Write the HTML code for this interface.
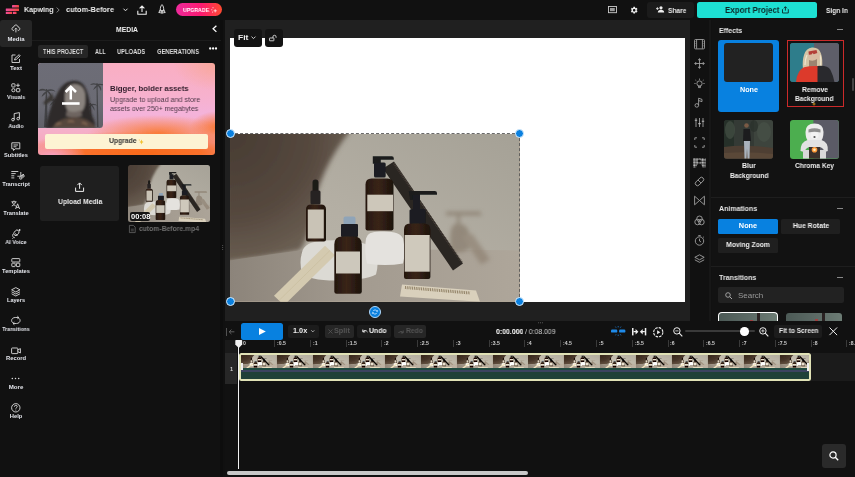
<!DOCTYPE html>
<html><head><meta charset="utf-8">
<style>
*{box-sizing:border-box;margin:0;padding:0}
html,body{width:855px;height:477px;overflow:hidden;background:#111;font-family:"Liberation Sans",sans-serif;color:#fff}
.a{position:absolute}
.t{position:absolute;white-space:nowrap;line-height:1;will-change:transform}
svg{position:absolute;overflow:visible}
</style></head><body>
<svg style="position:absolute;left:0;top:0;width:0;height:0"><symbol id="vid" viewBox="230 133.5 289.5 167.7" preserveAspectRatio="xMidYMid slice">
<defs>
<linearGradient id="gbg" x1="0" y1="1" x2="1" y2="0">
 <stop offset="0" stop-color="#bbb6ab"/><stop offset="0.45" stop-color="#b4afa4"/><stop offset="1" stop-color="#a5a196"/>
</linearGradient>
<radialGradient id="gleft" cx="230" cy="133" r="130" gradientUnits="userSpaceOnUse">
 <stop offset="0" stop-color="#483c33"/><stop offset="0.6" stop-color="#54473d"/><stop offset="1" stop-color="#6a5e52"/>
</radialGradient>
<linearGradient id="gfl" x1="0" y1="0" x2="1" y2="0">
 <stop offset="0" stop-color="#8c847a"/><stop offset="0.45" stop-color="#a39b90"/><stop offset="1" stop-color="#aea69a"/>
</linearGradient>
<linearGradient id="gbot" x1="0" y1="0" x2="1" y2="0"><stop offset="0" stop-color="#24170f"/><stop offset="0.45" stop-color="#3a2518"/><stop offset="1" stop-color="#1c120c"/></linearGradient>
<filter id="soft" x="-5%" y="-5%" width="110%" height="110%"><feGaussianBlur stdDeviation="0.45"/></filter>
<filter id="soft3" x="-20%" y="-20%" width="140%" height="140%"><feGaussianBlur stdDeviation="2.5"/></filter>
<filter id="soft4" x="-30%" y="-30%" width="160%" height="160%"><feGaussianBlur stdDeviation="2"/></filter>
<filter id="soft2" x="-30%" y="-30%" width="160%" height="160%"><feGaussianBlur stdDeviation="4"/></filter>
</defs>
<g filter="url(#soft)">
<rect x="230" y="133.5" width="289.5" height="167.7" fill="url(#gbg)"/>
<!-- left shadow arc -->
<g filter="url(#soft3)"><path d="M225 128 H352 Q318 170 312 215 Q308 240 300 250 Q270 256 225 262z" fill="url(#gleft)"/></g>
<!-- floor -->
<path d="M230 260 Q270 254 300 250 Q400 248 519.5 250 V301.2 H230z" fill="url(#gfl)"/>
<!-- shadows on wall right -->
<g filter="url(#soft4)" opacity="0.6">
<path d="M446 211 h34 l2 4 h-22 v8 q8 2 9 10 v16 q-8 4 -18 2 q-2 -12 0 -22 q2 -6 6 -6 v-8 h-11z" fill="#807262"/>
<path d="M462 236 l10 -3 l18 26 l-9 5z" fill="#8a7c6c"/>
</g>
<!-- white stones -->
<path d="M302 252 q2 -11 22 -12 q38 -2 50 8 q6 12 2 26 q-12 6 -40 6 q-28 0 -34 -8 q-3 -10 0 -20z" fill="#dcdad4"/>
<path d="M366 238 q1 -7 14 -7 q20 -1 23 7 q3 14 0 25 q-18 3 -36 0 q-3 -12 -1 -25z" fill="#e4e2de"/>
<!-- tall dark comb -->
<path d="M383 168 L394 161 L463 263 L453 270z" fill="#2b2622"/>
<path d="M394 163 L462 262" stroke="#4a423b" stroke-width="2" stroke-dasharray="0.9 0.9"/>
<!-- dropper bottle -->
<path d="M312.5 182 q0 -3 3 -3 q3 0 3 3 v9 h-6z" fill="#1d1a19"/>
<rect x="310.5" y="190" width="10" height="14" rx="1.5" fill="#252020"/>
<path d="M306 209 q0 -5 5 -5 h10 q5 0 5 5 v30 q0 2 -2 2 h-16 q-2 0 -2 -2z" fill="url(#gbot)"/>
<rect x="307.8" y="209" width="16" height="29" fill="#c9c3b6"/>
<!-- tall pump bottle -->
<path d="M372.8 155.7 h19 q2 0 2 2 v1.6 h-13 v4 h-8z" fill="#1a1c1e"/>
<rect x="374" y="162" width="11.7" height="15" rx="1.5" fill="#1c1e20"/>
<path d="M365.5 184 q0 -6 6 -6 h16 q6 0 6 6 v44 q0 2 -2 2 h-24 q-2 0 -2 -2z" fill="url(#gbot)"/>
<rect x="367.3" y="194.2" width="25.7" height="16.5" fill="#cdc7ba"/>
<!-- right pump bottle -->
<path d="M408.8 190.5 h26 q2.2 0 2.2 2 v1.7 h-17 v5 h-10z" fill="#1a1c1e"/>
<rect x="413" y="194" width="7" height="16" fill="#1c1e20"/>
<rect x="409.5" y="208.8" width="16.5" height="15" rx="1.5" fill="#1c1e20"/>
<path d="M404 229 q0 -6 6 -6 h14.4 q6 0 6 6 v47.5 q0 2 -2 2 h-22.4 q-2 0 -2 -2z" fill="url(#gbot)"/>
<rect x="404.7" y="234.5" width="25" height="36.7" fill="#cfc9bc"/>
<!-- wooden comb left -->
<path d="M274 295.2 L325 245.2 L335 254.8 L284 304.8z" fill="#d4cab0"/>
<path d="M279 300 L330 250" stroke="#c4b896" stroke-width="0.8" opacity="0.6"/>
<!-- front pump bottle -->
<rect x="343.5" y="216" width="12" height="8.6" rx="2" fill="#8fa4b8"/>
<rect x="341" y="223.5" width="17" height="13" rx="1" fill="#1c1e20"/>
<path d="M334.3 244 q0 -8 8 -8 h11.5 q8 0 8 8 v47 q0 2.2 -2.2 2.2 h-23 q-2.3 0 -2.3 -2.2z" fill="url(#gbot)"/>
<rect x="336" y="251" width="24" height="22" fill="#cdc8bc"/>
<!-- wooden comb right -->
<path d="M402 284 L476 290 L480 301.2 L400 296z" fill="#d9d0bc"/>
<path d="M405 287 L470 292.5" stroke="#8e7e62" stroke-width="3" stroke-dasharray="0.9 0.9"/>
</g>
</symbol></svg>
<div class="a" style="left:0px;top:0px;width:855px;height:20px;background:#111;"></div>
<svg style="left:0px;top:0px;" width="20" height="15" viewBox="0 0 20 15"><defs><linearGradient id="lg" x1="0" y1="0" x2="1" y2="0"><stop offset="0" stop-color="#ee4c9c"/><stop offset="1" stop-color="#f2443c"/></linearGradient></defs><g fill="url(#lg)">
 <rect x="12" y="5.1" width="7" height="2.5" rx="0.3"/>
 <rect x="5.8" y="8.4" width="13.2" height="2.6" rx="0.3"/>
 <rect x="5.8" y="11.8" width="6.4" height="2.3" rx="0.3"/>
 <rect x="13" y="11.8" width="3.5" height="2.3" rx="0.3"/></g></svg>
<div class="t" id="t0" style="left:24.10px;top:6.09px;font-size:7.9px;color:#eee;font-weight:bold;transform:scaleX(0.9003);transform-origin:0 0;">Kapwing</div>
<svg style="left:56px;top:7px;" width="4" height="6" viewBox="0 0 4 6"><path d="M0.6 0.6L3.2 3L0.6 5.4" stroke="#999" stroke-width="0.8" fill="none"/></svg>
<div class="t" id="t1" style="left:66.00px;top:6.09px;font-size:7.9px;color:#eee;font-weight:bold;transform:scaleX(0.9345);transform-origin:0 0;">cutom-Before</div>
<svg style="left:122.5px;top:8px;" width="5" height="4" viewBox="0 0 5 4"><path d="M0.5 0.7L2.5 2.8L4.5 0.7" stroke="#ddd" stroke-width="1" fill="none"/></svg>
<svg style="left:137px;top:4.5px;" width="10" height="10" viewBox="0 0 10 10"><path d="M5 7V1.2M2.6 3.4L5 1L7.4 3.4M0.8 5.8v3.4h8.4V5.8" stroke="#eee" stroke-width="1.1" fill="none"/></svg>
<svg style="left:158px;top:4px;" width="8" height="10" viewBox="0 0 8 10"><path d="M4 0.6C2.6 2 2.2 3.8 2.3 6.6h3.4C5.8 3.8 5.4 2 4 0.6zM2.3 5.5L0.8 8.6h1.6M5.7 5.5l1.5 3.1H5.6M3.1 7v2.6M4.9 7v2.6M4 7v2.6" stroke="#eee" stroke-width="0.9" fill="none"/></svg>
<div class="a" style="left:175.6px;top:3.3px;width:46.8px;height:12.7px;background:linear-gradient(90deg,#ee2a9c 0%,#fb1a70 55%,#ff4a30 100%);border-radius:6.5px;"></div>
<div class="t" id="t2" style="left:182.60px;top:6.72px;font-size:6.1px;color:#fff;font-weight:bold;transform:scaleX(0.8569);transform-origin:0 0;">UPGRADE</div>
<svg style="left:211px;top:7px;" width="6" height="6" viewBox="0 0 6 6"><path d="M4.2 2.2v3.2M2.6 3.8h3.2" stroke="#fff" stroke-width="0.7"/><circle cx="2" cy="0.7" r="0.55" fill="#fff"/><circle cx="0.8" cy="2.8" r="0.5" fill="#fff"/><circle cx="1.6" cy="5" r="0.5" fill="#fff"/></svg>
<svg style="left:608px;top:5.8px;" width="9" height="7.2" viewBox="0 0 9 7.2"><rect x="0.5" y="0.5" width="8" height="6.2" fill="none" stroke="#ccc" stroke-width="0.9"/><rect x="2" y="2" width="4.8" height="3.2" fill="#999"/></svg>
<svg style="left:629.8px;top:5.5px;" width="8.4" height="8.4" viewBox="0 0 24 24"><path fill="#eee" d="M19.14 12.94c.04-.3.06-.61.06-.94 0-.32-.02-.64-.07-.94l2.03-1.58a.49.49 0 0 0 .12-.61l-1.92-3.32a.488.488 0 0 0-.59-.22l-2.39.96c-.5-.38-1.03-.7-1.62-.94l-.36-2.54a.484.484 0 0 0-.48-.41h-3.840c-.24 0-.43.17-.47.41l-.36 2.54c-.59.24-1.13.57-1.62.94l-2.39-.96c-.22-.08-.47 0-.59.22L2.74 8.87c-.12.21-.08.47.12.61l2.03 1.58c-.05.3-.09.63-.09.94s.02.64.07.94l-2.030 1.58a.49.49 0 0 0-.12.61l1.92 3.32c.12.22.37.29.59.22l2.39-.96c.5.38 1.03.7 1.62.94l.36 2.54c.05.24.24.41.48.41h3.84c.24 0 .44-.17.47-.41l.36-2.54c.59-.24 1.13-.56 1.62-.94l2.39.96c.22.08.47 0 .59-.22l1.92-3.32c.12-.22.07-.47-.12-.61l-2.01-1.58zM12 15.6c-1.98 0-3.6-1.62-3.6-3.6s1.62-3.6 3.6-3.6 3.6 1.62 3.6 3.6-1.62 3.6-3.6 3.6z"/></svg>
<div class="a" style="left:647.4px;top:1.8px;width:46.8px;height:16px;background:#1b1b1b;border-radius:3px;"></div>
<svg style="left:655.6px;top:6.3px;" width="8" height="6.5" viewBox="0 0 8 6.5"><circle cx="5" cy="1.8" r="1.6" fill="#eee"/><path d="M1.8 6.5c0-1.9 1.4-2.8 3.2-2.8s3.2.9 3.2 2.8z" fill="#eee"/><path d="M0 2.6h2.8M1.4 1.2v2.8" stroke="#eee" stroke-width="0.8"/></svg>
<div class="t" id="t3" style="left:667.60px;top:6.76px;font-size:7.7px;color:#e8e8e8;font-weight:bold;transform:scaleX(0.8639);transform-origin:0 0;">Share</div>
<div class="a" style="left:697px;top:1.9px;width:120.4px;height:15.9px;background:#1de0d3;border-radius:2.5px;"></div>
<div class="t" id="t4" style="left:724.70px;top:6.15px;font-size:9px;color:#0c2a2a;font-weight:bold;transform:scaleX(0.8859);transform-origin:0 0;">Export Project</div>
<svg style="left:782.3px;top:5.8px;" width="6.8" height="7.5" viewBox="0 0 6.8 7.5"><path d="M3.4 4.6V0.8M1.8 2.3L3.4 0.7L5 2.3M0.5 3.2v3.8h5.8V3.2" stroke="#0c2a2a" stroke-width="0.9" fill="none"/></svg>
<div class="t" id="t5" style="left:825.50px;top:7.15px;font-size:7.7px;color:#f0f0f0;font-weight:bold;transform:scaleX(0.8570);transform-origin:0 0;">Sign In</div>
<div class="a" style="left:0px;top:20px;width:32px;height:26.5px;background:#262626;border-radius:2.5px;"></div>
<svg style="left:11.2px;top:24.2px;" width="9.6" height="9.6" viewBox="0 0 9.6 9.6"><path d="M3 6.6C1.8 6.6 1 5.8 1 4.8S1.7 3.1 2.7 3.1C3 1.8 3.8 1 4.9 1s1.9.8 2.2 2.1c1 0 1.7.8 1.7 1.7S8.1 6.6 6.8 6.6" stroke="#ddd" stroke-width="0.9" fill="none"/><path d="M4.9 8.4V4.3M3.7 5.4L4.9 4.2L6.1 5.4" stroke="#ddd" stroke-width="0.9" fill="none"/></svg>
<div class="t" id="t6" style="left:16.00px;top:36.84px;font-size:5.6px;color:#e4e6ec;font-weight:bold;transform:translateX(-50%) scaleX(1.0654);transform-origin:50% 0;">Media</div>
<svg style="left:11.2px;top:54.35000000000001px;" width="9.6" height="9.6" viewBox="0 0 9.6 9.6"><path d="M4.5 1H1v7.5h7.5V5" stroke="#ddd" stroke-width="0.9" fill="none"/><path d="M3.5 6L4 4.3L8.2 0.7L9.2 1.8L5.2 5.6z" stroke="#ddd" stroke-width="0.9" fill="none"/></svg>
<div class="t" id="t7" style="left:16.00px;top:65.89px;font-size:5.6px;color:#e4e6ec;font-weight:bold;transform:translateX(-50%) scaleX(1.0917);transform-origin:50% 0;">Text</div>
<svg style="left:11.2px;top:83.4px;" width="9.6" height="9.6" viewBox="0 0 9.6 9.6"><rect x="0.8" y="0.8" width="3.2" height="3.2" rx="0.5" stroke="#ddd" stroke-width="0.9" fill="none"/><path d="M7 0.5v3.6M5.2 2.3h3.6" stroke="#ddd" stroke-width="0.9" fill="none"/><rect x="0.8" y="5.6" width="3.2" height="3.2" rx="1.6" stroke="#ddd" stroke-width="0.9" fill="none"/><rect x="5.4" y="5.6" width="3.4" height="3.2" rx="0.5" stroke="#ddd" stroke-width="0.9" fill="none"/></svg>
<div class="t" id="t8" style="left:16.00px;top:94.94px;font-size:5.6px;color:#e4e6ec;font-weight:bold;transform:translateX(-50%) scaleX(0.9240);transform-origin:50% 0;">Visuals</div>
<svg style="left:11.2px;top:112.45px;" width="9.6" height="9.6" viewBox="0 0 9.6 9.6"><path d="M3.2 7.6V1.6L8.4 0.6V6.6" stroke="#ddd" stroke-width="0.9" fill="none"/><circle cx="2" cy="7.6" r="1.3" stroke="#ddd" stroke-width="0.9" fill="none"/><circle cx="7.2" cy="6.6" r="1.3" stroke="#ddd" stroke-width="0.9" fill="none"/></svg>
<div class="t" id="t9" style="left:16.00px;top:123.99px;font-size:5.6px;color:#e4e6ec;font-weight:bold;transform:translateX(-50%) scaleX(0.9478);transform-origin:50% 0;">Audio</div>
<svg style="left:11.2px;top:141.5px;" width="9.6" height="9.6" viewBox="0 0 9.6 9.6"><path d="M0.8 0.8h8v6h-4.5L2.5 8.5V6.8H0.8z" stroke="#ddd" stroke-width="0.9" fill="none"/><path d="M2.5 3h4.5M2.5 4.8h3" stroke="#ddd" stroke-width="0.9" fill="none"/></svg>
<div class="t" id="t10" style="left:16.00px;top:153.04px;font-size:5.6px;color:#e4e6ec;font-weight:bold;transform:translateX(-50%) scaleX(1.0059);transform-origin:50% 0;">Subtitles</div>
<svg style="left:11.4px;top:170.6px;" width="14" height="8.6" viewBox="0 0 14 8.6"><path d="M0.3 0.5h7M0.3 2.6h4.4M0.3 4.8h3M0.3 6.9h3" stroke="#ddd" stroke-width="0.9" fill="none"/><path d="M9.8 1v4.2l-3.4 0.1M9.8 5.2l3.2-2" stroke="#ddd" stroke-width="0.9" fill="none"/><circle cx="12" cy="5" r="1.2" stroke="#ddd" stroke-width="0.9" fill="none"/><circle cx="9.8" cy="7" r="1.2" stroke="#ddd" stroke-width="0.9" fill="none"/></svg>
<div class="t" id="t11" style="left:16.00px;top:182.09px;font-size:5.6px;color:#e4e6ec;font-weight:bold;transform:translateX(-50%) scaleX(1.0194);transform-origin:50% 0;">Transcript</div>
<svg style="left:11.2px;top:199.6px;" width="9.6" height="9.6" viewBox="0 0 9.6 9.6"><path d="M0.5 1.8h5M3 0.6v1.2M1.2 1.8c.6 2 1.8 3.3 3.6 4.2M4.6 1.8C4 3.8 2.8 5.2 0.8 6" stroke="#ddd" stroke-width="0.9" fill="none"/><path d="M4.6 9L6.6 3.8L8.6 9M5.3 7.4h2.6" stroke="#ddd" stroke-width="0.9" fill="none"/></svg>
<div class="t" id="t12" style="left:16.00px;top:211.14px;font-size:5.6px;color:#e4e6ec;font-weight:bold;transform:translateX(-50%) scaleX(1.0291);transform-origin:50% 0;">Translate</div>
<svg style="left:11.2px;top:228.64999999999998px;" width="9.6" height="9.6" viewBox="0 0 9.6 9.6"><rect x="3.4" y="0.8" width="4" height="6" rx="2" transform="rotate(40 5.4 3.8)" stroke="#ddd" stroke-width="0.9" fill="none"/><path d="M4 4.5l2.5 2" stroke="#ddd" stroke-width="0.9" fill="none"/><path d="M1.8 5.2c-.6 1.6.2 3.2 2 3.6M2.6 8.6L1.4 9.6" stroke="#ddd" stroke-width="0.9" fill="none"/><circle cx="8.6" cy="1" r="0.9" fill="#ddd"/></svg>
<div class="t" id="t13" style="left:16.00px;top:240.19px;font-size:5.6px;color:#e4e6ec;font-weight:bold;transform:translateX(-50%) scaleX(0.9812);transform-origin:50% 0;">AI Voice</div>
<svg style="left:11.2px;top:257.7px;" width="9.6" height="9.6" viewBox="0 0 9.6 9.6"><rect x="0.8" y="0.6" width="8" height="3.4" rx="0.6" stroke="#ddd" stroke-width="0.9" fill="none"/><rect x="0.8" y="5.2" width="3.4" height="3.4" rx="0.6" stroke="#ddd" stroke-width="0.9" fill="none"/><rect x="5.4" y="5.2" width="3.4" height="3.4" rx="0.6" stroke="#ddd" stroke-width="0.9" fill="none"/></svg>
<div class="t" id="t14" style="left:16.00px;top:269.24px;font-size:5.6px;color:#e4e6ec;font-weight:bold;transform:translateX(-50%) scaleX(1.0223);transform-origin:50% 0;">Templates</div>
<svg style="left:11.2px;top:286.75px;" width="9.6" height="9.6" viewBox="0 0 9.6 9.6"><path d="M4.8 0.6L9 2.8L4.8 5L0.6 2.8z" stroke="#ddd" stroke-width="0.9" fill="none"/><path d="M0.6 4.8L4.8 7L9 4.8M0.6 6.8L4.8 9L9 6.8" stroke="#ddd" stroke-width="0.9" fill="none"/></svg>
<div class="t" id="t15" style="left:16.00px;top:298.29px;font-size:5.6px;color:#e4e6ec;font-weight:bold;transform:translateX(-50%) scaleX(1.0008);transform-origin:50% 0;">Layers</div>
<svg style="left:11.2px;top:315.8px;" width="9.6" height="9.6" viewBox="0 0 9.6 9.6"><path d="M2.5 7.2C1.3 6.6 0.6 5.6 0.6 4.5c0-1.8 1.7-3 3.6-3H7.8M6.4 0.2L7.8 1.5L6.4 2.8M7.2 1.8c1.2.6 1.9 1.6 1.9 2.7 0 1.8-1.7 3-3.6 3H2M3.4 8.8L2 7.5L3.4 6.2" stroke="#ddd" stroke-width="0.9" fill="none"/></svg>
<div class="t" id="t16" style="left:16.00px;top:327.34px;font-size:5.6px;color:#e4e6ec;font-weight:bold;transform:translateX(-50%) scaleX(0.9152);transform-origin:50% 0;">Transitions</div>
<svg style="left:11.2px;top:346.85px;" width="9.6" height="9.6" viewBox="0 0 9.6 9.6"><rect x="0.6" y="1" width="6.2" height="5.6" rx="0.6" stroke="#ddd" stroke-width="0.9" fill="none"/><path d="M6.8 3l2.6-1.4v4.4L6.8 4.6" stroke="#ddd" stroke-width="0.9" fill="none"/></svg>
<div class="t" id="t17" style="left:16.00px;top:356.39px;font-size:5.6px;color:#e4e6ec;font-weight:bold;transform:translateX(-50%) scaleX(1.0416);transform-origin:50% 0;">Record</div>
<svg style="left:11.2px;top:373.90000000000003px;" width="9.6" height="9.6" viewBox="0 0 9.6 9.6"><circle cx="1.3" cy="4.5" r="0.75" fill="#ddd"/><circle cx="4.5" cy="4.5" r="0.75" fill="#ddd"/><circle cx="7.7" cy="4.5" r="0.75" fill="#ddd"/></svg>
<div class="t" id="t18" style="left:16.00px;top:385.44px;font-size:5.6px;color:#e4e6ec;font-weight:bold;transform:translateX(-50%) scaleX(1.0925);transform-origin:50% 0;">More</div>
<svg style="left:11.2px;top:402.95000000000005px;" width="9.6" height="9.6" viewBox="0 0 9.6 9.6"><circle cx="4.8" cy="4.8" r="4.2" stroke="#ddd" stroke-width="0.9" fill="none"/><path d="M3.4 3.7c0-.9.6-1.4 1.4-1.4s1.4.5 1.4 1.3c0 1-1.4 1.1-1.4 2.1" stroke="#ddd" stroke-width="0.9" fill="none"/><circle cx="4.8" cy="7.1" r="0.5" fill="#ddd"/></svg>
<div class="t" id="t19" style="left:16.00px;top:414.49px;font-size:5.6px;color:#e4e6ec;font-weight:bold;transform:translateX(-50%) scaleX(1.0376);transform-origin:50% 0;">Help</div>
<div class="a" style="left:220px;top:20px;width:2.5px;height:457px;background:#0d0d0d;"></div>
<div class="a" style="left:222.5px;top:20px;width:2.5px;height:457px;background:#101010;"></div>
<div class="t" id="t20" style="left:116.00px;top:26.62px;font-size:6.8px;color:#eee;font-weight:bold;transform:scaleX(1.0035);transform-origin:0 0;">MEDIA</div>
<svg style="left:212.3px;top:24.8px;" width="5.2" height="7.6" viewBox="0 0 5.2 7.6"><path d="M4.4 0.7L1.1 3.8L4.4 6.9" stroke="#fff" stroke-width="1.3" fill="none"/></svg>
<div class="a" style="left:32px;top:39.5px;width:188.5px;height:1px;background:#1c1c1c;"></div>
<div class="a" style="left:38.2px;top:44.8px;width:49.9px;height:12.9px;background:#262626;border-radius:2px;"></div>
<div class="t" id="t21" style="left:43.20px;top:47.98px;font-size:7.2px;color:#ddd;font-weight:bold;transform:scaleX(0.7673);transform-origin:0 0;">THIS PROJECT</div>
<div class="t" id="t22" style="left:94.90px;top:48.15px;font-size:7px;color:#ddd;font-weight:bold;transform:scaleX(0.7901);transform-origin:0 0;">ALL</div>
<div class="t" id="t23" style="left:117.30px;top:48.15px;font-size:7px;color:#ddd;font-weight:bold;transform:scaleX(0.8260);transform-origin:0 0;">UPLOADS</div>
<div class="t" id="t24" style="left:157.20px;top:48.15px;font-size:7px;color:#ddd;font-weight:bold;transform:scaleX(0.8279);transform-origin:0 0;">GENERATIONS</div>
<svg style="left:208.9px;top:47.2px;" width="8.2" height="3" viewBox="0 0 8.2 3"><circle cx="1.2" cy="1.5" r="1.15" fill="#fff"/><circle cx="4.1" cy="1.5" r="1.15" fill="#fff"/><circle cx="7" cy="1.5" r="1.15" fill="#fff"/></svg>
<div class="a" style="left:38.2px;top:62.8px;width:176.7px;height:92.6px;border-radius:3px;overflow:hidden;background:
 radial-gradient(ellipse 45px 28px at 180px 0px, rgba(248,165,145,0.85) 0%, rgba(248,165,145,0) 100%),
 radial-gradient(ellipse 34px 12px at 14px 92px, rgba(247,160,190,1) 0%, rgba(247,160,190,0) 100%),
 radial-gradient(ellipse 130px 22px at 105px 90px, #f96a1a 0%, rgba(250,110,35,0.95) 45%, rgba(250,120,40,0) 100%),
 radial-gradient(ellipse 70px 18px at 120px 70px, rgba(250,120,45,0.9) 0%, rgba(250,130,50,0) 100%),
 radial-gradient(ellipse 28px 16px at 180px 64px, rgba(250,115,40,0.95) 0%, rgba(250,125,45,0) 100%),
 linear-gradient(180deg,#f9aec2 0%,#f7b1cd 35%,#f4b3da 55%,#f5afc8 75%,#f7a2b4 100%)">
 <div class="a" style="left:0;top:0;width:65.3px;height:64.9px;border-radius:0 0 3.5px 0;background:linear-gradient(180deg,#6d6d77 0%,#6b6b74 60%,#606068 100%);overflow:hidden">
  <svg style="left:0;top:0" width="65.3" height="64.9" viewBox="0 0 65.3 64.9"><defs><filter id="pblur" x="-10%" y="-10%" width="120%" height="120%"><feGaussianBlur stdDeviation="0.9"/></filter></defs>
   <g fill="#3c3d3f" opacity="0.85">
    <path d="M6 64 L8 26 L9 26 L9.5 64z"/><path d="M8.5 27 q-6 -3 -8 1 q5 -1 8 0 q-4 2 -5 6 q5 -4 6 -5 q3 3 4 6 q0 -5 -3 -7 q5 -1 7 1 q-2 -4 -9 -2z"/>
    <path d="M13 64 L15 36 L16 36 L16.5 64z"/><path d="M15.5 37 q-5 -3 -8 0 q5 0 8 1 q-3 2 -4 5 q4 -3 5 -4 q3 2 4 5 q0 -4 -3 -6 q4 -1 6 1 q-2 -4 -8 -2z"/>
    <path d="M59 64 L58.5 20 L59.5 20 L60.5 64z"/><path d="M59 21 q-5 -2 -7 1 q4 -1 7 0 q-3 2 -4 5 q4 -3 5 -4 q2 2 3 5 q1 -4 -2 -6 q4 0 6 1 q-2 -3 -8 -2z"/>
    <path d="M51 64 L52 40 L53 40 L53.5 64z"/><path d="M52.5 41 q-5 -2 -7 1 q4 -1 7 0 q-3 2 -3 5 q3 -3 4 -4 q2 2 3 5 q0 -4 -2 -6 q4 0 5 1 q-2 -3 -7 -2z"/>
   </g>
   <g filter="url(#pblur)">
   <path d="M8 64.9 q1 -10 4 -18 q3 -10 8 -18 q5 -10 14 -11 q9 -1 13 6 q4 8 5 18 q1 10 4 15 q2 5 0 8z" fill="#2d2a29"/>
   <path d="M5 40 q4 -4 9 -10 l2 6 q-5 4 -9 6z" fill="#3a3736"/>
   <path d="M27 31 q1 -9 9 -10 q9 0 11 9 q1 10 -1 15 q-3 6 -9 6 q-7 -1 -9 -7 q-2 -6 -1 -13z" fill="#8a837e"/>
   <path d="M29 47 q6 4 14 0 l1 6 q-8 3 -16 0z" fill="#6e6560"/>
   <path d="M14 64.9 q6 -10 22 -11 q16 1 22 11z" fill="#57473c"/>
   <path d="M18 62 q3 -3 5 -1 M30 59 q3 -2 6 0 M44 60 q3 -1 5 2" stroke="#8a6e58" stroke-width="1.4" fill="none"/>
   </g>
  </svg>
 </div>
</div>
<svg style="left:62.4px;top:85px;" width="17.6" height="20" viewBox="0 0 17.6 20"><path d="M8.8 14.4V2.2M3.6 7L8.8 1.8L14 7" stroke="#fff" stroke-width="2.5" fill="none"/><rect x="0" y="17.2" width="17.6" height="2.6" fill="#fff"/></svg>
<div class="t" id="t25" style="left:110.40px;top:84.57px;font-size:7.8px;color:#2e1c2a;font-weight:bold;transform:scaleX(0.9962);transform-origin:0 0;">Bigger, bolder assets</div>
<div class="t" id="t26" style="left:110.40px;top:96.21px;font-size:7.4px;color:#4e3848;transform:scaleX(0.9640);transform-origin:0 0;">Upgrade to upload and store</div>
<div class="t" id="t27" style="left:110.40px;top:105.11px;font-size:7.4px;color:#4e3848;transform:scaleX(0.9312);transform-origin:0 0;">assets over 250+ megabytes</div>
<div class="a" style="left:44.9px;top:133.9px;width:163.3px;height:14.9px;background:#fdf3d3;border-radius:2px;"></div>
<div class="t" id="t28" style="left:108.80px;top:138.27px;font-size:7.1px;color:#333;font-weight:bold;transform:scaleX(0.9618);transform-origin:0 0;">Upgrade</div>
<svg style="left:137.8px;top:138.6px;" width="6" height="6" viewBox="0 0 6 6"><path d="M3.5 0.5Q3.8 2.6 5.6 3Q3.8 3.4 3.5 5.5Q3.2 3.4 1.4 3Q3.2 2.6 3.5 0.5z" fill="#f2c230"/><path d="M1.2 0.3Q1.3 1 2 1.1Q1.3 1.2 1.2 1.9Q1.1 1.2 0.4 1.1Q1.1 1 1.2 0.3z" fill="#f2c230"/></svg>
<div class="a" style="left:40.2px;top:165.7px;width:78.5px;height:55.3px;background:#1f1f1f;border-radius:2.5px;"></div>
<svg style="left:74.6px;top:181.7px;" width="9.2" height="10" viewBox="0 0 9.2 10"><path d="M4.6 6.8V1M2.4 3.1L4.6 0.9L6.8 3.1M0.6 5.6v3.8h8V5.6" stroke="#eee" stroke-width="1" fill="none"/></svg>
<div class="t" id="t29" style="left:57.60px;top:197.53px;font-size:7.5px;color:#eee;font-weight:bold;transform:scaleX(0.9101);transform-origin:0 0;">Upload Media</div>
<div class="a" style="left:128.2px;top:165px;width:81.6px;height:56.7px;border-radius:2.5px;overflow:hidden"><svg style="left:0;top:0" width="81.6" height="56.7" viewBox="255 135.6 234 162.5" preserveAspectRatio="none"><use href="#vid" x="230" y="133.5" width="289.5" height="167.7"/></svg></div>
<div class="a" style="left:129.8px;top:211.7px;width:20.6px;height:9.3px;background:#141414;border-radius:2px;"></div>
<div class="t" id="t30" style="left:130.80px;top:213.59px;font-size:6.6px;color:#fff;font-weight:bold;transform:scaleX(1.1471);transform-origin:0 0;">00:08</div>
<svg style="left:129.1px;top:225.3px;" width="6.6" height="8" viewBox="0 0 6.6 8"><path d="M0.4 0.4h4l1.8 1.8v5.4H0.4z" fill="none" stroke="#666" stroke-width="0.8"/><path d="M1.8 4.2h3M1.8 5.8h3" stroke="#666" stroke-width="0.7"/></svg>
<div class="t" id="t31" style="left:138.70px;top:225.41px;font-size:7.4px;color:#6f6f6f;font-weight:bold;transform:scaleX(0.9186);transform-origin:0 0;">cutom-Before.mp4</div>
<div class="a" style="left:225px;top:20px;width:465.4px;height:300.8px;background:#202020;"></div>
<div class="a" style="left:229.9px;top:38.3px;width:455.1px;height:263.4px;background:#fff;"></div>
<div class="a" id="video" style="left:230px;top:133.5px;width:289.5px;height:168px;overflow:hidden;background:#b3a592"><svg style="left:0;top:0" width="289.5" height="167.7" viewBox="0 0 289.5 167.7"><use href="#vid" x="0" y="0" width="289.5" height="167.7"/></svg>
</div>
<div class="a" style="left:229.5px;top:133px;width:290.5px;height:169px;border-top:1px dashed rgba(90,90,90,0.9);border-right:1px dashed rgba(90,90,90,0.9)"></div>
<div class="a" style="left:225.5px;top:129.0px;width:9px;height:9px;border-radius:50%;background:#0a80df;border:0.7px solid #d8ecfc"></div>
<div class="a" style="left:515.0px;top:129.0px;width:9px;height:9px;border-radius:50%;background:#0a80df;border:0.7px solid #d8ecfc"></div>
<div class="a" style="left:225.5px;top:296.7px;width:9px;height:9px;border-radius:50%;background:#0a80df;border:0.7px solid #d8ecfc"></div>
<div class="a" style="left:515.0px;top:296.7px;width:9px;height:9px;border-radius:50%;background:#0a80df;border:0.7px solid #d8ecfc"></div>
<div class="a" style="left:369.1px;top:306.2px;width:12px;height:12px;border-radius:50%;background:#0a80df;border:1px solid #b0d8fb"></div>
<svg style="left:372.1px;top:309.2px;" width="6" height="6" viewBox="0 0 6 6"><path d="M1 2.2A2.3 2.3 0 0 1 5.2 2.4M5 3.8A2.3 2.3 0 0 1 0.8 3.6" stroke="#a8d6ff" stroke-width="1" fill="none"/><path d="M4.2 2.4h1.4V1M1.8 3.6H0.4V5" stroke="#a8d6ff" stroke-width="0.8" fill="none"/></svg>
<svg style="left:537.5px;top:321.6px;" width="5" height="1.5" viewBox="0 0 5 1.5"><circle cx="0.6" cy="0.7" r="0.5" fill="#777"/><circle cx="2.5" cy="0.7" r="0.5" fill="#777"/><circle cx="4.4" cy="0.7" r="0.5" fill="#777"/></svg>
<svg style="left:221.6px;top:245px;" width="1.5" height="5" viewBox="0 0 1.5 5"><circle cx="0.7" cy="0.6" r="0.5" fill="#666"/><circle cx="0.7" cy="2.5" r="0.5" fill="#666"/><circle cx="0.7" cy="4.4" r="0.5" fill="#666"/></svg>
<div class="a" style="left:233.6px;top:28.9px;width:28px;height:17.8px;background:#131313;border-radius:3px;"></div>
<div class="t" id="t32" style="left:238.20px;top:34.41px;font-size:7.4px;color:#eee;font-weight:bold;transform:scaleX(1.1578);transform-origin:0 0;">Fit</div>
<svg style="left:250.7px;top:35.5px;" width="5" height="3.2" viewBox="0 0 5 3.2"><path d="M0.5 0.6L2.5 2.6L4.5 0.6" stroke="#ddd" stroke-width="0.9" fill="none"/></svg>
<div class="a" style="left:264.6px;top:28.9px;width:18.3px;height:17.8px;background:#131313;border-radius:3px;"></div>
<svg style="left:269.2px;top:34.6px;" width="8.4" height="6.2" viewBox="0 0 8.4 6.2"><rect x="0.5" y="3" width="4.4" height="2.8" rx="0.3" fill="none" stroke="#ddd" stroke-width="0.9"/><path d="M3.9 3V1.9a1.6 1.6 0 0 1 3.2 0v0.9" stroke="#ddd" stroke-width="0.9" fill="none"/></svg>
<div class="a" style="left:690.4px;top:20px;width:18.8px;height:300.8px;background:#111;"></div>
<div class="a" style="left:709.2px;top:20px;width:2.3px;height:300.8px;background:#171717;"></div>
<svg style="left:694.2px;top:38.5px;" width="11" height="11" viewBox="0 0 11 11"><rect x="0.5" y="0.5" width="10" height="9.4" rx="1" stroke="#a8a8a8" stroke-width="0.85" fill="none"/><path d="M2.6 0.8v8.8M8.4 0.8v8.8" stroke="#a8a8a8" stroke-width="0.85" fill="none"/><path d="M1.5 2.4h0.7M1.5 4.6h0.7M1.5 6.8h0.7M8.8 2.4h0.7M8.8 4.6h0.7M8.8 6.8h0.7" stroke="#bbb" stroke-width="0.6"/></svg>
<svg style="left:694.2px;top:58.1px;" width="11" height="11" viewBox="0 0 11 11"><path d="M5.5 0.8v9.4M0.8 5.5h9.4M4 2.2L5.5 0.8L7 2.2M4 8.8L5.5 10.2L7 8.8M2.2 4L0.8 5.5L2.2 7M8.8 4L10.2 5.5L8.8 7" stroke="#a8a8a8" stroke-width="0.85" fill="none"/></svg>
<svg style="left:694.2px;top:77.7px;" width="11" height="11" viewBox="0 0 11 11"><circle cx="5.5" cy="5.5" r="2.6" stroke="#a8a8a8" stroke-width="0.85" fill="none"/><path d="M4.5 8.2h2v1.4h-2z" stroke="#a8a8a8" stroke-width="0.85" fill="none"/><path d="M5.5 0.6v1.2M1.4 2l0.9 0.8M9.6 2l-0.9 0.8M0.4 5.5h1.2M9.4 5.5h1.2" stroke="#a8a8a8" stroke-width="0.85" fill="none"/></svg>
<svg style="left:694.2px;top:97.30000000000001px;" width="11" height="11" viewBox="0 0 11 11"><circle cx="2.8" cy="8.4" r="1.8" stroke="#a8a8a8" stroke-width="0.85" fill="none"/><path d="M4.6 8.4V1.2l3.4 1.2v2.2l-3.4-1" stroke="#a8a8a8" stroke-width="0.85" fill="none"/></svg>
<svg style="left:694.2px;top:116.9px;" width="11" height="11" viewBox="0 0 11 11"><path d="M2 1v9M5.5 1v9M9 1v9" stroke="#a8a8a8" stroke-width="0.85" fill="none"/><path d="M0.8 3.2h2.4M4.3 6.6h2.4M7.8 4.2h2.4" stroke="#bbb" stroke-width="1.1"/></svg>
<svg style="left:694.2px;top:136.5px;" width="11" height="11" viewBox="0 0 11 11"><path d="M0.8 3V0.8H3M8 0.8h2.2V3M10.2 8v2.2H8M3 10.2H0.8V8" stroke="#a8a8a8" stroke-width="0.85" fill="none"/></svg>
<svg style="left:693.4px;top:156.5px;" width="12.6" height="10.6" viewBox="0 0 12.6 10.6"><defs><pattern id="chk" width="2.2" height="2.2" patternUnits="userSpaceOnUse" patternTransform="rotate(45)"><rect width="1.1" height="1.1" fill="#e0e0e0"/><rect x="1.1" y="1.1" width="1.1" height="1.1" fill="#e0e0e0"/></pattern></defs><path d="M0 1h12.6v9.6H9.5q-1 -4 -3.2 -4q-2.2 0 -3.2 4H0z" fill="url(#chk)"/><circle cx="6.3" cy="4" r="1.6" fill="#111"/></svg>
<svg style="left:694.2px;top:175.70000000000002px;" width="11" height="11" viewBox="0 0 11 11"><rect x="0.5" y="3.3" width="10" height="4.4" rx="2.2" transform="rotate(-45 5.5 5.5)" stroke="#a8a8a8" stroke-width="0.85" fill="none"/><path d="M4 4l3 3" stroke="#a8a8a8" stroke-width="0.85" fill="none"/></svg>
<svg style="left:694.2px;top:195.3px;" width="11" height="11" viewBox="0 0 11 11"><path d="M0.6 1.2v8.6l4.9-4.3zM10.4 1.2v8.6L5.5 5.5z" stroke="#a8a8a8" stroke-width="0.85" fill="none"/></svg>
<svg style="left:694.2px;top:214.9px;" width="11" height="11" viewBox="0 0 11 11"><circle cx="5.5" cy="3.8" r="2.8" stroke="#a8a8a8" stroke-width="0.85" fill="none"/><circle cx="3.6" cy="7" r="2.8" stroke="#a8a8a8" stroke-width="0.85" fill="none"/><circle cx="7.4" cy="7" r="2.8" stroke="#a8a8a8" stroke-width="0.85" fill="none"/></svg>
<svg style="left:694.2px;top:234.5px;" width="11" height="11" viewBox="0 0 11 11"><circle cx="5.5" cy="6" r="4.2" stroke="#a8a8a8" stroke-width="0.85" fill="none"/><path d="M5.5 3.6V6l1.6 1M4.3 0.6h2.4M9.2 1.8l0.8 0.8" stroke="#a8a8a8" stroke-width="0.85" fill="none"/></svg>
<svg style="left:694.2px;top:254.10000000000002px;" width="11" height="11" viewBox="0 0 11 11"><path d="M5.5 0.8L10.2 3.3L5.5 5.8L0.8 3.3z" stroke="#a8a8a8" stroke-width="0.85" fill="none"/><path d="M0.8 5.8L5.5 8.3L10.2 5.8" stroke="#a8a8a8" stroke-width="0.85" fill="none"/></svg>
<div class="a" style="left:711.5px;top:20px;width:143.5px;height:300.8px;background:#121212;"></div>
<div class="t" id="t33" style="left:718.80px;top:26.54px;font-size:7.6px;color:#e6e6e6;font-weight:bold;transform:scaleX(0.9199);transform-origin:0 0;">Effects</div>
<div class="a" style="left:836.8px;top:29.4px;width:6.2px;height:1px;background:#888;"></div>
<div class="a" style="left:718.4px;top:39.9px;width:60.3px;height:72.3px;background:#0881e0;border-radius:3px;"></div>
<div class="a" style="left:724.2px;top:43px;width:48.7px;height:38.8px;background:#222;border-radius:3px;"></div>
<div class="t" id="t34" style="left:739.70px;top:85.55px;font-size:7px;color:#fff;font-weight:bold;transform:scaleX(1.0298);transform-origin:0 0;">None</div>
<div class="a" style="left:786.9px;top:39.9px;width:57.4px;height:67.4px;border:1.8px solid #cc2a2a"></div>
<div class="a" style="left:790px;top:42.6px;width:48.9px;height:39.2px;border-radius:3px;overflow:hidden;background:#2d7c8a">
<svg style="left:0;top:0;filter:blur(0.3px)" width="48.9" height="39.2" viewBox="0 0 48.9 39.2">
<rect x="0" y="0" width="24" height="39.2" fill="#2e7d8b"/>
<rect x="24" y="0" width="25" height="39.2" fill="#5e5e69"/>
<path d="M13 26 q-1 -8 1 -14 q2 -7 8 -7.5 q7 -0.5 9 6 q2 6 1 15 q-9 2 -19 0.5z" fill="#d4c5a6"/>
<path d="M15 22 q0 -6 2 -10 M30 12 q1.5 5 0.5 11" stroke="#efe6d0" stroke-width="1.2" fill="none"/>
<ellipse cx="24" cy="12.5" rx="5.8" ry="6.3" transform="rotate(-15 24 12.5)" fill="#d9bba2"/>
<path d="M18.5 8.5 l8 -1.5 l0.8 3 l-3.6 1.2 l-1 -1.2 l-1.2 1.6 l-2.6 0.2z" fill="#b33f38"/>
<path d="M19 17 q4 2 8 -1 v8 h-8z" fill="#9c8470"/>
<path d="M6 39.2 q1 -12 8 -15 q6 -1.5 14 -1.2 v16.4z" fill="#dc3a2b"/>
<path d="M27.5 23 q10 -1 13 4 q3 6 4 12.2 h-17z" fill="#29292d"/>
</svg></div>
<div class="t" id="t35" style="left:801.50px;top:85.55px;font-size:7px;color:#eee;font-weight:bold;transform:scaleX(0.9535);transform-origin:0 0;">Remove</div>
<div class="t" id="t36" style="left:795.20px;top:94.85px;font-size:7px;color:#eee;font-weight:bold;transform:scaleX(0.9416);transform-origin:0 0;">Background</div>
<svg style="left:812px;top:102px;" width="4" height="4" viewBox="0 0 4 4"><path d="M2 0.5v3M0.5 2h3" stroke="#e0a020" stroke-width="0.8"/></svg>
<div class="a" style="left:851.8px;top:77.6px;width:2.4px;height:13.6px;background:#444;border-radius:1px;"></div>
<div class="a" style="left:723.9px;top:120.1px;width:49.3px;height:38.6px;border-radius:3px;overflow:hidden;background:#323833">
<svg style="left:0;top:0;filter:blur(0.4px)" width="49.3" height="38.6" viewBox="0 0 49.3 38.6">
<rect width="49.3" height="38.6" fill="#343a35"/>
<path d="M0 0h10v30H0z" fill="#263029"/><path d="M30 0h19.3v28H30z" fill="#3d443d"/>
<ellipse cx="6" cy="10" rx="5" ry="9" fill="#445044" opacity="0.7"/><ellipse cx="40" cy="12" rx="7" ry="10" fill="#4a544a" opacity="0.6"/><ellipse cx="30" cy="6" rx="4" ry="6" fill="#2a302b" opacity="0.7"/>
<path d="M0 27 q20 -3 49.3 1 V38.6H0z" fill="#4e3f33"/>
<path d="M0 33 q25 -2 49.3 1 V38.6H0z" fill="#5a4838"/>
<circle cx="22.5" cy="5.5" r="2.3" fill="#7a5a45"/>
<path d="M19.5 9 h6.5 l1 12 h-8z" fill="#1c1c1e"/>
<path d="M20 21 h6 l-0.5 17.6 h-2 l-0.5 -10 l-0.5 10 h-2z" fill="#a9b2bc"/>
</svg></div>
<div class="t" id="t37" style="left:741.90px;top:162.35px;font-size:7px;color:#eee;font-weight:bold;transform:scaleX(0.9850);transform-origin:0 0;">Blur</div>
<div class="t" id="t38" style="left:729.90px;top:171.55px;font-size:7px;color:#eee;font-weight:bold;transform:scaleX(0.9391);transform-origin:0 0;">Background</div>
<div class="a" style="left:789.8px;top:120.1px;width:48.9px;height:38.6px;border-radius:3px;overflow:hidden;background:#4cae4f">
<svg style="left:0;top:0;filter:blur(0.3px)" width="48.9" height="38.6" viewBox="0 0 48.9 38.6">
<rect x="23.4" width="25.5" height="38.6" fill="#5b5b66"/>
<path d="M15.5 12 q0 -8.5 9 -8.5 q9 0 9 8.5 q0 7 -3 9 h-12 q-3 -2 -3 -9z" fill="#ececec"/>
<path d="M18.5 9.5 q6 -2.5 12 0 v3 q-6 -1.5 -12 0z" fill="#8e8e8e"/>
<ellipse cx="24.5" cy="15.5" rx="4" ry="3.2" fill="#f4f4f4"/>
<circle cx="24.5" cy="17" r="1.1" fill="#555"/>
<path d="M10.5 31 q0 -9 7 -11 h14 q7 2 6.3 11 l-3 1 q-2 -5 -6 -5 h-8.5 q-4 0 -6 5z" fill="#e2e2e2"/>
<path d="M13 30 h6 v8.6 h-6zM30 30 h6 v8.6 h-6z" fill="#d8d8d8"/>
<path d="M19 27 h11 v11.6 h-11z" fill="#3b302b"/>
<circle cx="24.5" cy="29.8" r="2.8" fill="#ff9a3a"/>
<circle cx="24.5" cy="29.8" r="1.3" fill="#fff0c0"/>
</svg></div>
<div class="t" id="t39" style="left:794.90px;top:162.35px;font-size:7px;color:#eee;font-weight:bold;transform:scaleX(0.9449);transform-origin:0 0;">Chroma Key</div>
<div class="a" style="left:711.2px;top:197.2px;width:143.8px;height:1px;background:#1e1e1e;"></div>
<div class="t" id="t40" style="left:719.20px;top:204.58px;font-size:7.2px;color:#e6e6e6;font-weight:bold;transform:scaleX(0.9760);transform-origin:0 0;">Animations</div>
<div class="a" style="left:837px;top:208px;width:6px;height:1px;background:#888;"></div>
<div class="a" style="left:718.4px;top:218.6px;width:59.8px;height:15.2px;background:#0881e0;border-radius:1.5px;"></div>
<div class="t" id="t41" style="left:748.30px;top:223.27px;font-size:7.1px;color:#fff;font-weight:bold;transform:translateX(-50%) scaleX(1.0338);transform-origin:50% 0;">None</div>
<div class="a" style="left:780.8px;top:218.6px;width:59.5px;height:15.2px;background:#1f1f1f;border-radius:1.5px;"></div>
<div class="t" id="t42" style="left:810.60px;top:223.27px;font-size:7.1px;color:#eee;font-weight:bold;transform:translateX(-50%) scaleX(0.9689);transform-origin:50% 0;">Hue Rotate</div>
<div class="a" style="left:718.4px;top:237.5px;width:59.8px;height:15.2px;background:#1f1f1f;border-radius:1.5px;"></div>
<div class="t" id="t43" style="left:748.30px;top:242.06px;font-size:7.1px;color:#eee;font-weight:bold;transform:translateX(-50%) scaleX(0.9471);transform-origin:50% 0;">Moving Zoom</div>
<div class="a" style="left:711.2px;top:265.6px;width:143.8px;height:1px;background:#1e1e1e;"></div>
<div class="t" id="t44" style="left:719.20px;top:274.08px;font-size:7.2px;color:#e6e6e6;font-weight:bold;transform:scaleX(0.9754);transform-origin:0 0;">Transitions</div>
<div class="a" style="left:837px;top:277.3px;width:6px;height:1px;background:#888;"></div>
<div class="a" style="left:718.4px;top:287.3px;width:125.8px;height:16.2px;background:#222;border-radius:2px;"></div>
<svg style="left:725px;top:292px;" width="7.5" height="7.5" viewBox="0 0 7.5 7.5"><circle cx="3" cy="3" r="2.3" stroke="#aaa" stroke-width="0.9" fill="none"/><path d="M4.7 4.7L7 7" stroke="#aaa" stroke-width="1"/></svg>
<div class="t" id="t45" style="left:737.50px;top:291.97px;font-size:7.8px;color:#999;transform:scaleX(1.0234);transform-origin:0 0;">Search</div>
<div class="a" style="left:718.4px;top:311.7px;width:59.2px;height:12px;border-radius:4px 4px 0 0;border:1.8px solid #fff;border-bottom:0;overflow:hidden;background:linear-gradient(90deg,#4c5a56,#5e6c67 60%,#6c7c74)">
<div class="a" style="left:38px;top:0;width:2.5px;height:12px;background:#2a2222"></div><div class="a" style="left:31px;top:7px;width:3px;height:4px;background:#a04040"></div></div>
<div class="a" style="left:786px;top:313.2px;width:55.9px;height:8px;border-radius:3px 3px 0 0;overflow:hidden;background:linear-gradient(90deg,#4c5a56,#5e6c67 60%,#6c7c74)">
<div class="a" style="left:36px;top:0;width:2.5px;height:12px;background:#2a2222"></div><div class="a" style="left:29px;top:5.5px;width:3px;height:4px;background:#a04040"></div></div>
<div class="a" style="left:225px;top:320.8px;width:630px;height:156.2px;background:#111;"></div>
<svg style="left:226px;top:327.6px;" width="8.6" height="8" viewBox="0 0 8.6 8"><path d="M0.5 0v8" stroke="#5a5a5a" stroke-width="0.9"/><path d="M8.4 3.8H3.2M5.4 1.6L3.2 3.8L5.4 6" stroke="#6a6a6a" stroke-width="0.9" fill="none"/></svg>
<div class="a" style="left:240.9px;top:323.3px;width:42.1px;height:16.6px;background:#0881e0;border-radius:2.5px;"></div>
<svg style="left:259.4px;top:328.2px;" width="6.8" height="7" viewBox="0 0 6.8 7"><path d="M0 0L6.8 3.5L0 7z" fill="#fff"/></svg>
<div class="a" style="left:288.4px;top:325px;width:30.6px;height:13.1px;background:#1c1c1c;border-radius:2px;"></div>
<div class="t" id="t46" style="left:292.70px;top:328.22px;font-size:6.8px;color:#eee;font-weight:bold;transform:scaleX(1.0753);transform-origin:0 0;">1.0x</div>
<svg style="left:310.9px;top:330.3px;" width="3.6" height="2.4" viewBox="0 0 3.6 2.4"><path d="M0.3 0.3L1.8 1.9L3.3 0.3" stroke="#ccc" stroke-width="0.8" fill="none"/></svg>
<div class="a" style="left:324.5px;top:325px;width:29.1px;height:13px;background:#262626;border-radius:2px;"></div>
<svg style="left:327.8px;top:328.6px;" width="5" height="5" viewBox="0 0 5 5"><path d="M0.5 0.5l4 4M4.5 0.5l-4 4" stroke="#555" stroke-width="0.8"/></svg>
<div class="t" id="t47" style="left:334.00px;top:327.76px;font-size:7.1px;color:#555;font-weight:bold;transform:scaleX(1.0297);transform-origin:0 0;">Split</div>
<div class="a" style="left:356.8px;top:325px;width:34px;height:13px;background:#1c1c1c;border-radius:2px;"></div>
<svg style="left:361.5px;top:329.2px;" width="6" height="4" viewBox="0 0 6 4"><path d="M0.8 0.5v2.4h2.4" stroke="#fff" stroke-width="0.9" fill="none"/><path d="M1 2.6C2 1.2 4.2 1 5.5 3" stroke="#fff" stroke-width="0.9" fill="none"/></svg>
<div class="t" id="t48" style="left:369.00px;top:327.76px;font-size:7.1px;color:#f2f2f2;font-weight:bold;transform:scaleX(0.9704);transform-origin:0 0;">Undo</div>
<div class="a" style="left:393.9px;top:325px;width:32.3px;height:13px;background:#262626;border-radius:2px;"></div>
<svg style="left:398px;top:329.5px;" width="6" height="4" viewBox="0 0 6 4"><path d="M0.5 3C1.8 1 4 1.2 5 2.6M5.2 0.5v2.4H2.8" stroke="#555" stroke-width="0.9" fill="none"/></svg>
<div class="t" id="t49" style="left:406.20px;top:327.76px;font-size:7.1px;color:#555;font-weight:bold;transform:scaleX(0.9516);transform-origin:0 0;">Redo</div>
<div class="t" id="t50" style="left:496.10px;top:327.80px;font-size:7.3px;color:#fff;font-weight:bold;transform:scaleX(0.9472);transform-origin:0 0;">0:00.000</div>
<div class="t" id="t51" style="left:525.10px;top:327.80px;font-size:7.3px;color:#d0d0d0;transform:scaleX(0.9421);transform-origin:0 0;">/ 0:08.009</div>
<svg style="left:537.6px;top:322.1px;" width="5" height="1.5" viewBox="0 0 5 1.5"><circle cx="0.6" cy="0.7" r="0.55" fill="#666"/><circle cx="2.5" cy="0.7" r="0.55" fill="#666"/><circle cx="4.4" cy="0.7" r="0.55" fill="#666"/></svg>
<svg style="left:610.8px;top:326.3px;" width="14.4" height="10" viewBox="0 0 14.4 10"><rect x="0" y="3.6" width="6.3" height="3" rx="1.2" fill="#1f8ae8"/><rect x="8.1" y="3.6" width="6.3" height="3" rx="1.2" fill="#1f8ae8"/><path d="M7.2 0v1.4M7.2 8.6V10M4.4 0.6l0.7 1.1M10 0.6l-0.7 1.1M4.4 9.4l0.7-1.1M10 9.4l-0.7-1.1" stroke="#1f8ae8" stroke-width="0.7"/></svg>
<svg style="left:631.9px;top:328px;" width="14.3" height="7.4" viewBox="0 0 14.3 7.4"><rect x="0" y="0" width="1.5" height="7.4" fill="#eee"/><rect x="12.8" y="0" width="1.5" height="7.4" fill="#eee"/><path d="M1.5 3.1h2.8v1.2H1.5zM12.8 3.1H10v1.2h2.8z" fill="#eee"/><path d="M3.6 1L6.4 3.7L3.6 6.4zM10.7 1L7.9 3.7L10.7 6.4z" fill="#eee"/></svg>
<svg style="left:652.9px;top:326.7px;" width="10.5" height="10.5" viewBox="0 0 10.5 10.5"><circle cx="5.25" cy="5.25" r="4.6" stroke="#eee" stroke-width="1.1" fill="none" stroke-dasharray="2.6 1"/><path d="M4.1 3.2L7.3 5.25L4.1 7.3z" fill="#eee"/></svg>
<svg style="left:672.5px;top:327.2px;" width="9.8" height="9.8" viewBox="0 0 9.8 9.8"><circle cx="3.9" cy="3.9" r="3.2" stroke="#eee" stroke-width="1" fill="none"/><path d="M6.2 6.2L9.3 9.3" stroke="#eee" stroke-width="1.1"/><path d="M2.3 3.9h3.2" stroke="#eee" stroke-width="0.8"/></svg>
<div class="a" style="left:685px;top:330.3px;width:70.3px;height:1.6px;background:#3a3a3a;border-radius:1px;"></div>
<div class="a" style="left:740.1px;top:327.3px;width:8.6px;height:8.6px;background:#fff;border-radius:4.3px;"></div>
<svg style="left:759.2px;top:327.2px;" width="9.8" height="9.8" viewBox="0 0 9.8 9.8"><circle cx="3.9" cy="3.9" r="3.2" stroke="#eee" stroke-width="1" fill="none"/><path d="M6.2 6.2L9.3 9.3" stroke="#eee" stroke-width="1.1"/><path d="M2.3 3.9h3.2M3.9 2.3v3.2" stroke="#eee" stroke-width="0.8"/></svg>
<div class="a" style="left:774px;top:325px;width:47.9px;height:12.6px;background:#1c1c1c;border-radius:2px;"></div>
<div class="t" id="t52" style="left:778.60px;top:328.02px;font-size:6.8px;color:#e6e6e6;font-weight:bold;transform:scaleX(0.9582);transform-origin:0 0;">Fit to Screen</div>
<svg style="left:828.8px;top:327.4px;" width="8.6" height="8.6" viewBox="0 0 8.6 8.6"><path d="M0.5 0.5l7.6 7.6M8.1 0.5L0.5 8.1" stroke="#eee" stroke-width="1"/></svg>
<div class="a" style="left:225px;top:340.2px;width:12.2px;height:12.8px;background:#1a1a1a;"></div>
<div class="t" id="t53" style="left:243.00px;top:341.47px;font-size:5.1px;color:#d0d0d0;font-weight:bold;">0</div>
<div class="a" style="left:274.15000000000003px;top:340.1px;width:0.9px;height:7px;background:#3a3a3a;"></div>
<div class="t" id="t54" style="left:276.90px;top:341.47px;font-size:5.1px;color:#d0d0d0;font-weight:bold;">:0.5</div>
<div class="a" style="left:309.91px;top:340.1px;width:0.9px;height:7px;background:#3a3a3a;"></div>
<div class="t" id="t55" style="left:312.66px;top:341.47px;font-size:5.1px;color:#d0d0d0;font-weight:bold;">:1</div>
<div class="a" style="left:345.67px;top:340.1px;width:0.9px;height:7px;background:#3a3a3a;"></div>
<div class="t" id="t56" style="left:348.42px;top:341.47px;font-size:5.1px;color:#d0d0d0;font-weight:bold;">:1.5</div>
<div class="a" style="left:381.43px;top:340.1px;width:0.9px;height:7px;background:#3a3a3a;"></div>
<div class="t" id="t57" style="left:384.18px;top:341.47px;font-size:5.1px;color:#d0d0d0;font-weight:bold;">:2</div>
<div class="a" style="left:417.19px;top:340.1px;width:0.9px;height:7px;background:#3a3a3a;"></div>
<div class="t" id="t58" style="left:419.94px;top:341.47px;font-size:5.1px;color:#d0d0d0;font-weight:bold;">:2.5</div>
<div class="a" style="left:452.95px;top:340.1px;width:0.9px;height:7px;background:#3a3a3a;"></div>
<div class="t" id="t59" style="left:455.70px;top:341.47px;font-size:5.1px;color:#d0d0d0;font-weight:bold;">:3</div>
<div class="a" style="left:488.71px;top:340.1px;width:0.9px;height:7px;background:#3a3a3a;"></div>
<div class="t" id="t60" style="left:491.46px;top:341.47px;font-size:5.1px;color:#d0d0d0;font-weight:bold;">:3.5</div>
<div class="a" style="left:524.4699999999999px;top:340.1px;width:0.9px;height:7px;background:#3a3a3a;"></div>
<div class="t" id="t61" style="left:527.22px;top:341.47px;font-size:5.1px;color:#d0d0d0;font-weight:bold;">:4</div>
<div class="a" style="left:560.2299999999999px;top:340.1px;width:0.9px;height:7px;background:#3a3a3a;"></div>
<div class="t" id="t62" style="left:562.98px;top:341.47px;font-size:5.1px;color:#d0d0d0;font-weight:bold;">:4.5</div>
<div class="a" style="left:595.9899999999999px;top:340.1px;width:0.9px;height:7px;background:#3a3a3a;"></div>
<div class="t" id="t63" style="left:598.74px;top:341.47px;font-size:5.1px;color:#d0d0d0;font-weight:bold;">:5</div>
<div class="a" style="left:631.7499999999999px;top:340.1px;width:0.9px;height:7px;background:#3a3a3a;"></div>
<div class="t" id="t64" style="left:634.50px;top:341.47px;font-size:5.1px;color:#d0d0d0;font-weight:bold;">:5.5</div>
<div class="a" style="left:667.51px;top:340.1px;width:0.9px;height:7px;background:#3a3a3a;"></div>
<div class="t" id="t65" style="left:670.26px;top:341.47px;font-size:5.1px;color:#d0d0d0;font-weight:bold;">:6</div>
<div class="a" style="left:703.27px;top:340.1px;width:0.9px;height:7px;background:#3a3a3a;"></div>
<div class="t" id="t66" style="left:706.02px;top:341.47px;font-size:5.1px;color:#d0d0d0;font-weight:bold;">:6.5</div>
<div class="a" style="left:739.03px;top:340.1px;width:0.9px;height:7px;background:#3a3a3a;"></div>
<div class="t" id="t67" style="left:741.78px;top:341.47px;font-size:5.1px;color:#d0d0d0;font-weight:bold;">:7</div>
<div class="a" style="left:774.79px;top:340.1px;width:0.9px;height:7px;background:#3a3a3a;"></div>
<div class="t" id="t68" style="left:777.54px;top:341.47px;font-size:5.1px;color:#d0d0d0;font-weight:bold;">:7.5</div>
<div class="a" style="left:810.55px;top:340.1px;width:0.9px;height:7px;background:#3a3a3a;"></div>
<div class="t" id="t69" style="left:813.30px;top:341.47px;font-size:5.1px;color:#d0d0d0;font-weight:bold;">:8</div>
<div class="a" style="left:846.31px;top:340.1px;width:0.9px;height:7px;background:#3a3a3a;"></div>
<div class="t" id="t70" style="left:849.06px;top:341.47px;font-size:5.1px;color:#d0d0d0;font-weight:bold;">:8.5</div>
<div class="a" style="left:225px;top:353px;width:12.2px;height:30.5px;background:#272727;"></div>
<div class="t" id="t71" style="left:229.50px;top:366.74px;font-size:5.6px;color:#cfcfcf;font-weight:bold;">1</div>
<div class="a" style="left:811px;top:353px;width:44px;height:27.8px;background:#1b1b1b;"></div>
<div class="a" style="left:239.3px;top:352.6px;width:571.7px;height:28.4px;border:2px solid #e0e2b6;border-radius:2.5px;overflow:hidden;background:#1f4038"><div class="a" style="left:0;top:0;width:570px;height:13.4px;background:#9a8e80"></div><div class="a" style="left:0;top:13.3px;width:570px;height:2.1px;background:#1f4a40"></div><svg style="left:0.0px;top:0.4px;overflow:hidden;filter:contrast(1.35)" width="35.9" height="12.9" viewBox="232 148 287.5 150" preserveAspectRatio="none"><use href="#vid" x="230" y="133.5" width="289.5" height="167.7"/></svg><svg style="left:35.9px;top:0.4px;overflow:hidden;filter:contrast(1.35)" width="35.9" height="12.9" viewBox="232 148 287.5 150" preserveAspectRatio="none"><use href="#vid" x="230" y="133.5" width="289.5" height="167.7"/></svg><svg style="left:71.8px;top:0.4px;overflow:hidden;filter:contrast(1.35)" width="35.9" height="12.9" viewBox="232 148 287.5 150" preserveAspectRatio="none"><use href="#vid" x="230" y="133.5" width="289.5" height="167.7"/></svg><svg style="left:107.7px;top:0.4px;overflow:hidden;filter:contrast(1.35)" width="35.9" height="12.9" viewBox="232 148 287.5 150" preserveAspectRatio="none"><use href="#vid" x="230" y="133.5" width="289.5" height="167.7"/></svg><svg style="left:143.6px;top:0.4px;overflow:hidden;filter:contrast(1.35)" width="35.9" height="12.9" viewBox="232 148 287.5 150" preserveAspectRatio="none"><use href="#vid" x="230" y="133.5" width="289.5" height="167.7"/></svg><svg style="left:179.5px;top:0.4px;overflow:hidden;filter:contrast(1.35)" width="35.9" height="12.9" viewBox="232 148 287.5 150" preserveAspectRatio="none"><use href="#vid" x="230" y="133.5" width="289.5" height="167.7"/></svg><svg style="left:215.4px;top:0.4px;overflow:hidden;filter:contrast(1.35)" width="35.9" height="12.9" viewBox="232 148 287.5 150" preserveAspectRatio="none"><use href="#vid" x="230" y="133.5" width="289.5" height="167.7"/></svg><svg style="left:251.3px;top:0.4px;overflow:hidden;filter:contrast(1.35)" width="35.9" height="12.9" viewBox="232 148 287.5 150" preserveAspectRatio="none"><use href="#vid" x="230" y="133.5" width="289.5" height="167.7"/></svg><svg style="left:287.2px;top:0.4px;overflow:hidden;filter:contrast(1.35)" width="35.9" height="12.9" viewBox="232 148 287.5 150" preserveAspectRatio="none"><use href="#vid" x="230" y="133.5" width="289.5" height="167.7"/></svg><svg style="left:323.1px;top:0.4px;overflow:hidden;filter:contrast(1.35)" width="35.9" height="12.9" viewBox="232 148 287.5 150" preserveAspectRatio="none"><use href="#vid" x="230" y="133.5" width="289.5" height="167.7"/></svg><svg style="left:359.0px;top:0.4px;overflow:hidden;filter:contrast(1.35)" width="35.9" height="12.9" viewBox="232 148 287.5 150" preserveAspectRatio="none"><use href="#vid" x="230" y="133.5" width="289.5" height="167.7"/></svg><svg style="left:394.9px;top:0.4px;overflow:hidden;filter:contrast(1.35)" width="35.9" height="12.9" viewBox="232 148 287.5 150" preserveAspectRatio="none"><use href="#vid" x="230" y="133.5" width="289.5" height="167.7"/></svg><svg style="left:430.8px;top:0.4px;overflow:hidden;filter:contrast(1.35)" width="35.9" height="12.9" viewBox="232 148 287.5 150" preserveAspectRatio="none"><use href="#vid" x="230" y="133.5" width="289.5" height="167.7"/></svg><svg style="left:466.7px;top:0.4px;overflow:hidden;filter:contrast(1.35)" width="35.9" height="12.9" viewBox="232 148 287.5 150" preserveAspectRatio="none"><use href="#vid" x="230" y="133.5" width="289.5" height="167.7"/></svg><svg style="left:502.6px;top:0.4px;overflow:hidden;filter:contrast(1.35)" width="35.9" height="12.9" viewBox="232 148 287.5 150" preserveAspectRatio="none"><use href="#vid" x="230" y="133.5" width="289.5" height="167.7"/></svg><svg style="left:538.5px;top:0.4px;overflow:hidden;filter:contrast(1.35)" width="35.9" height="12.9" viewBox="232 148 287.5 150" preserveAspectRatio="none"><use href="#vid" x="230" y="133.5" width="289.5" height="167.7"/></svg><div class="a" style="left:0;top:15.4px;width:570px;height:2.3px;background:#3b4260"></div></div>
<div class="a" style="left:241.4px;top:362.5px;width:1.3px;height:7.5px;background:#eee;"></div>
<div class="a" style="left:807.4px;top:363px;width:1.3px;height:7.5px;background:#eee;"></div>
<div class="a" style="left:237.8px;top:345px;width:1.3px;height:123.6px;background:#f2f2f2;"></div>
<svg style="left:234.8px;top:340.2px;" width="7.5" height="8" viewBox="0 0 7.5 8"><path d="M0.3 0.8Q0.3 0 1 0h5.5q0.7 0 0.7 0.8v3.6L3.75 8L0.3 4.4z" fill="#f2f2f2"/></svg>
<div class="a" style="left:226.6px;top:470.5px;width:301.1px;height:4.7px;background:#c8c8c8;border-radius:2.4px;"></div>
<div class="a" style="left:822px;top:444px;width:24.4px;height:23.9px;background:#2a2a2a;border-radius:3px;"></div>
<svg style="left:829.2px;top:451.2px;" width="10" height="10" viewBox="0 0 10 10"><circle cx="4" cy="4" r="3.1" stroke="#fff" stroke-width="1.2" fill="none"/><path d="M6.3 6.3L9.2 9.2" stroke="#fff" stroke-width="1.4"/></svg>
</body></html>
